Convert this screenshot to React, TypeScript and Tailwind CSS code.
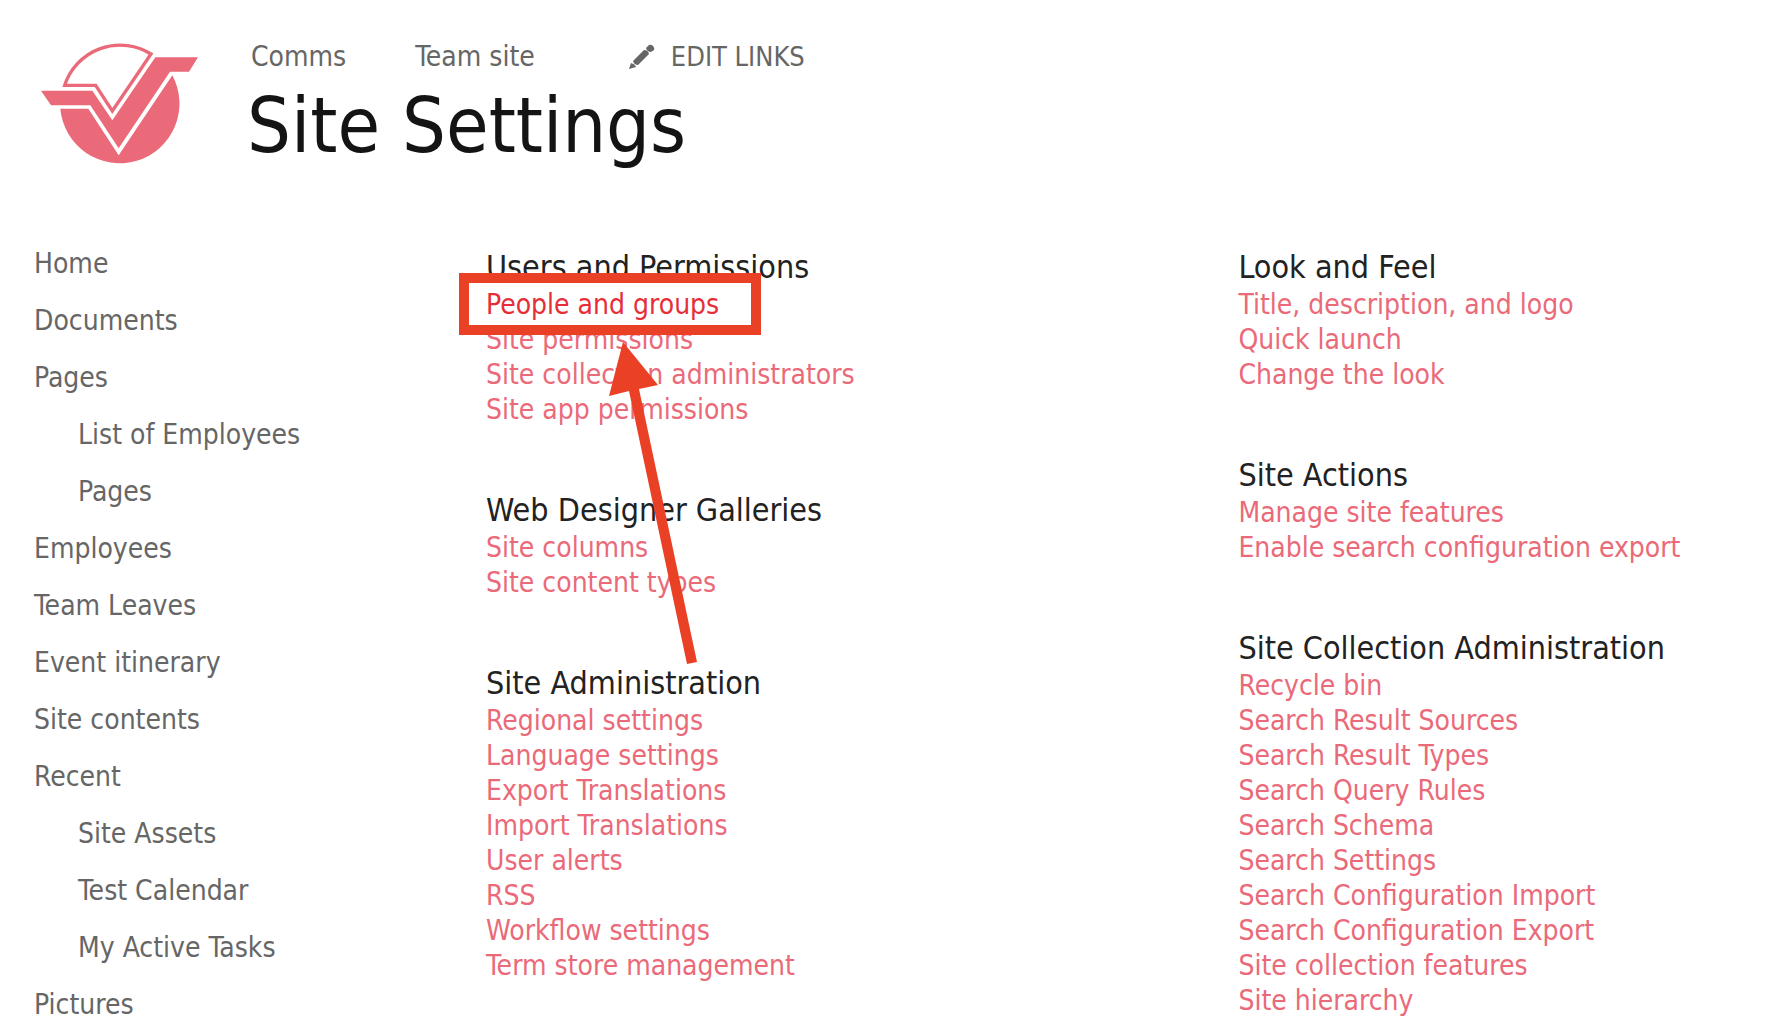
import React from 'react';

type NavItem = { label: string; children?: string[] };
type Section = { title: string; links: string[] };

const sideNav: NavItem[] = [
  { label: 'Home' },
  { label: 'Documents' },
  { label: 'Pages', children: ['List of Employees', 'Pages'] },
  { label: 'Employees' },
  { label: 'Team Leaves' },
  { label: 'Event itinerary' },
  { label: 'Site contents' },
  { label: 'Recent', children: ['Site Assets', 'Test Calendar', 'My Active Tasks'] },
  { label: 'Pictures' },
];

const leftSections: Section[] = [
  {
    title: 'Users and Permissions',
    links: ['People and groups', 'Site permissions', 'Site collection administrators', 'Site app permissions'],
  },
  { title: 'Web Designer Galleries', links: ['Site columns', 'Site content types'] },
  {
    title: 'Site Administration',
    links: [
      'Regional settings',
      'Language settings',
      'Export Translations',
      'Import Translations',
      'User alerts',
      'RSS',
      'Workflow settings',
      'Term store management',
    ],
  },
];

const rightSections: Section[] = [
  { title: 'Look and Feel', links: ['Title, description, and logo', 'Quick launch', 'Change the look'] },
  { title: 'Site Actions', links: ['Manage site features', 'Enable search configuration export'] },
  {
    title: 'Site Collection Administration',
    links: [
      'Recycle bin',
      'Search Result Sources',
      'Search Result Types',
      'Search Query Rules',
      'Search Schema',
      'Search Settings',
      'Search Configuration Import',
      'Search Configuration Export',
      'Site collection features',
      'Site hierarchy',
    ],
  },
];

const Logo = () => (
  <svg viewBox="33 40 471 363" className="h-[121px] w-[157px]" fill="#ea6a79" role="img" aria-label="Site logo">
    <path d="M104 167A175 175 0 0 1 363 73L247 244L197 167Z" fill="none" stroke="#ea6a79" strokeWidth="10" />
    <path d="M33 183H187L247 272L376 83H504L477 126H420L266 356L181 227H63Z" />
    <path d="M91 237H175L266 377L427 137A179 179 0 1 1 91 237Z" />
  </svg>
);

const PencilIcon = () => (
  <svg viewBox="0 0 26 26" className="size-[26px]" fill="#666" aria-hidden="true">
    <path d="M0 25L2 19Q6 20 7 23Z" />
    <path d="M4 17L15 6Q19 6 20 10L9 21Q5 21 4 17Z" />
    <path d="M17 4L20 1Q22 0 24 2Q26 4 25 6L22 8Q18 8 17 4Z" />
  </svg>
);

// Box and arrow pointing at the highlighted link
const Callout = () => (
  <>
    <span className="pointer-events-none absolute -top-3.5 -left-[27px] h-[62px] w-[302px] border-10 border-[#ea4025]" />
    <svg
      viewBox="0 0 89 322"
      className="pointer-events-none absolute top-[55px] left-[123px] h-[322px] w-[89px]"
      fill="#ea4025"
      aria-hidden="true"
    >
      <path d="M14 0L49 43L30 47L88 320L78 322L20 49L0 54Z" />
    </svg>
  </>
);

const SectionList = ({ sections }: { sections: Section[] }) => (
  <div className="flex flex-col gap-[63px]">
    {sections.map((section) => (
      <section key={section.title}>
        <h2 className="text-[32px] leading-10 text-[#222]">{section.title}</h2>
        <ul>
          {section.links.map((link) =>
            link === 'People and groups' ? (
              <li key={link} className="relative">
                <a href="#" className="text-[#e62e38]">{link}</a>
                <Callout />
              </li>
            ) : (
              <li key={link}>
                <a href="#" className="text-[#ea6a79] hover:underline">{link}</a>
              </li>
            )
          )}
        </ul>
      </section>
    ))}
  </div>
);

const App = () => {
  return (
    <div className="min-h-screen bg-white font-['DejaVu_Sans_Condensed','DejaVu_Sans',sans-serif] text-[28px] leading-[35px]">
      <header className="flex items-start pt-9 pl-[41px]">
        <a href="#" className="mt-[7px] mr-[49px] shrink-0">
          <Logo />
        </a>
        <div>
          <nav className="ml-1 flex items-center text-[#666] leading-10">
            <a href="#" className="mr-[69px]">Comms</a>
            <a href="#" className="mr-[94px]">Team site</a>
            <button type="button" className="flex items-center gap-4 text-[27px] leading-[42px]">
              <PencilIcon />
              EDIT LINKS
            </button>
          </nav>
          <h1 className="mt-2 text-[77px] leading-20 text-[#141414]">Site Settings</h1>
        </div>
      </header>

      <div className="mt-[69px] flex">
        <nav className="w-[486px] shrink-0 pl-[34px] text-[#666] leading-[57px]">
          <ul>
            {sideNav.map((item) => (
              <li key={item.label}>
                <a href="#">{item.label}</a>
                {item.children && (
                  <ul className="pl-11">
                    {item.children.map((child) => (
                      <li key={child}>
                        <a href="#">{child}</a>
                      </li>
                    ))}
                  </ul>
                )}
              </li>
            ))}
          </ul>
        </nav>

        <main className="grid flex-1 grid-cols-[3fr_2fr] pt-3 pr-10">
          <SectionList sections={leftSections} />
          <SectionList sections={rightSections} />
        </main>
      </div>
    </div>
  );
};

export default App;
